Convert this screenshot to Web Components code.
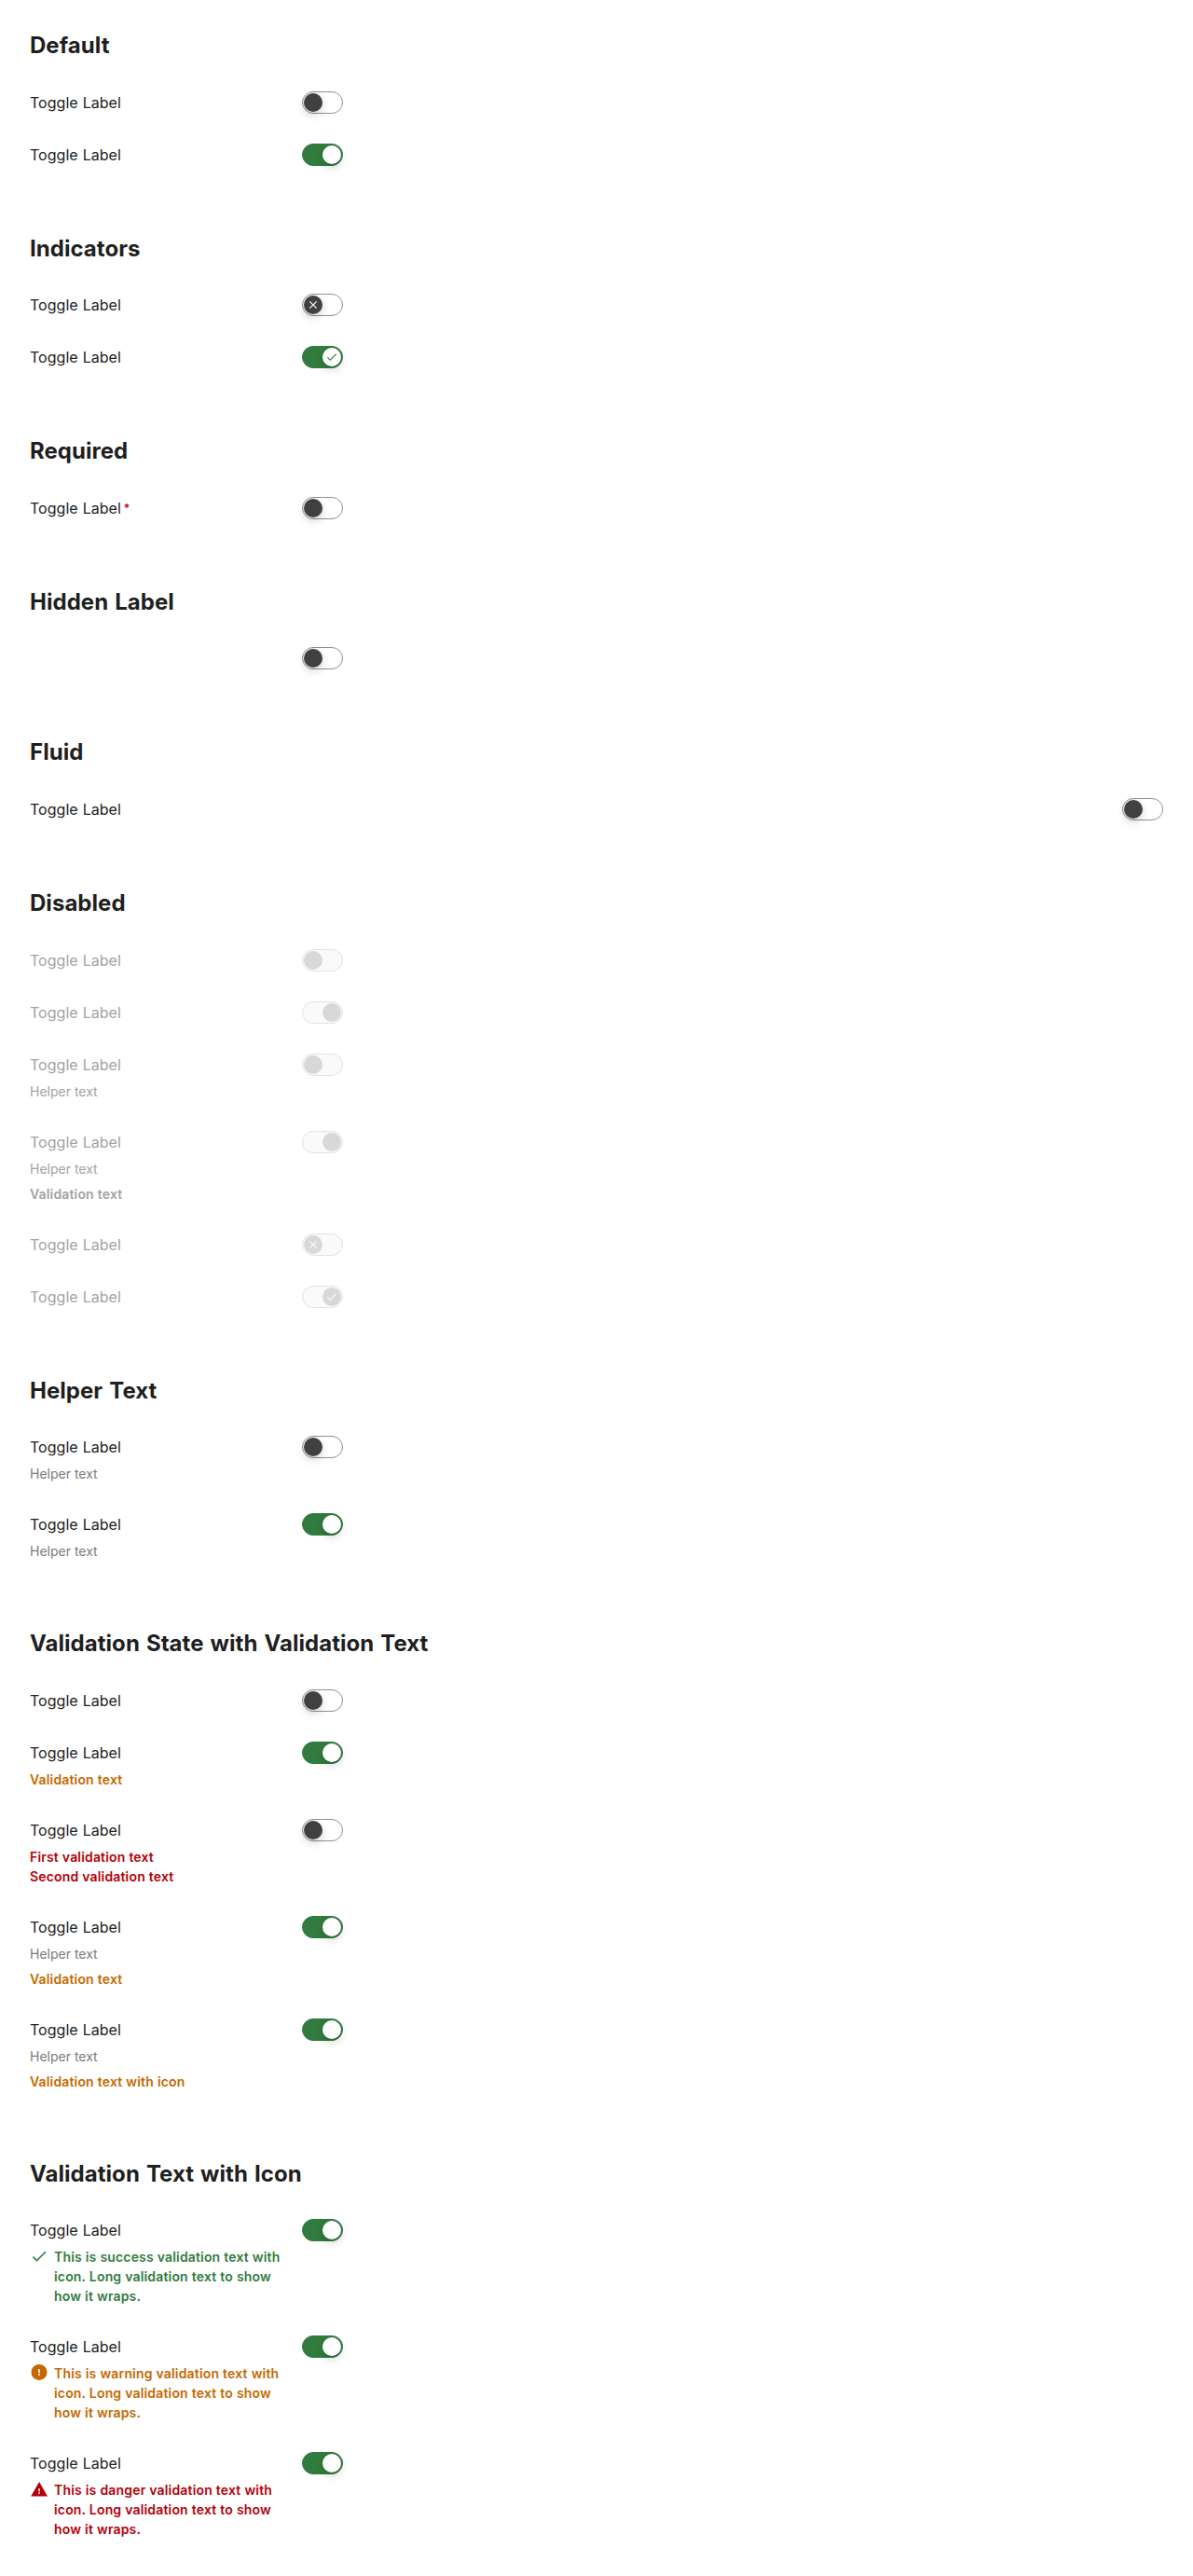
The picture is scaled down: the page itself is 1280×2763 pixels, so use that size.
<!DOCTYPE html>
<html lang="en">
<head>
<meta charset="utf-8">
<title>Toggle</title>
<style>
  body { margin: 0; background: #fff; font-family: Inter, "Liberation Sans", sans-serif; color: #222; }
</style>
</head>
<body>
<toggle-page>
  <toggle-section heading="Default">
    <ui-toggle label="Toggle Label"></ui-toggle>
    <ui-toggle label="Toggle Label" checked></ui-toggle>
  </toggle-section>
  <toggle-section heading="Indicators">
    <ui-toggle label="Toggle Label" indicator></ui-toggle>
    <ui-toggle label="Toggle Label" indicator checked></ui-toggle>
  </toggle-section>
  <toggle-section heading="Required">
    <ui-toggle label="Toggle Label" required></ui-toggle>
  </toggle-section>
  <toggle-section heading="Hidden Label">
    <ui-toggle></ui-toggle>
  </toggle-section>
  <toggle-section heading="Fluid">
    <ui-toggle label="Toggle Label" fluid></ui-toggle>
  </toggle-section>
  <toggle-section heading="Disabled">
    <ui-toggle label="Toggle Label" disabled></ui-toggle>
    <ui-toggle label="Toggle Label" disabled checked></ui-toggle>
    <ui-toggle label="Toggle Label" disabled><ui-helper>Helper text</ui-helper></ui-toggle>
    <ui-toggle label="Toggle Label" disabled checked>
      <ui-helper>Helper text</ui-helper>
      <ui-validation>Validation text</ui-validation>
    </ui-toggle>
    <ui-toggle label="Toggle Label" disabled indicator></ui-toggle>
    <ui-toggle label="Toggle Label" disabled indicator checked></ui-toggle>
  </toggle-section>
  <toggle-section heading="Helper Text">
    <ui-toggle label="Toggle Label"><ui-helper>Helper text</ui-helper></ui-toggle>
    <ui-toggle label="Toggle Label" checked><ui-helper>Helper text</ui-helper></ui-toggle>
  </toggle-section>
  <toggle-section heading="Validation State with Validation Text">
    <ui-toggle label="Toggle Label"></ui-toggle>
    <ui-toggle label="Toggle Label" checked><ui-validation state="warning">Validation text</ui-validation></ui-toggle>
    <ui-toggle label="Toggle Label"><ui-validation state="danger"><div>First validation text</div><div>Second validation text</div></ui-validation></ui-toggle>
    <ui-toggle label="Toggle Label" checked>
      <ui-helper>Helper text</ui-helper>
      <ui-validation state="warning">Validation text</ui-validation>
    </ui-toggle>
    <ui-toggle label="Toggle Label" checked>
      <ui-helper>Helper text</ui-helper>
      <ui-validation state="warning">Validation text with icon</ui-validation>
    </ui-toggle>
  </toggle-section>
  <toggle-section heading="Validation Text with Icon">
    <ui-toggle label="Toggle Label" checked><ui-validation state="success" icon>This is success validation text with icon. Long validation text to show how it wraps.</ui-validation></ui-toggle>
    <ui-toggle label="Toggle Label" checked><ui-validation state="warning" icon>This is warning validation text with icon. Long validation text to show how it wraps.</ui-validation></ui-toggle>
    <ui-toggle label="Toggle Label" checked><ui-validation state="danger" icon>This is danger validation text with icon. Long validation text to show how it wraps.</ui-validation></ui-toggle>
  </toggle-section>
</toggle-page>
<script>
const CHECK = 'M9 16.17 4.83 12l-1.42 1.41L9 19 21 7l-1.41-1.41z';
const CLOSE = 'M19 6.41 17.59 5 12 10.59 6.41 5 5 6.41 10.59 12 5 17.59 6.41 19 12 13.41 17.59 19 19 17.59 13.41 12z';
const ICONS = {
  success: CHECK,
  warning: 'M12 1.3a10.2 10.2 0 1 0 0 20.4 10.2 10.2 0 0 0 0-20.4zm1 14.3h-2v-2h2zm0-3.4h-2V7.6h2z',
  danger: 'M1.4 21h21.4L12.1 2.4zm11.7-3.2h-2v-1.8h2zm0-3.2h-2v-3.6h2z'
};
const svg = d => `<svg viewBox="0 0 24 24" aria-hidden="true"><path fill="currentColor" d="${d}"/></svg>`;

class Base extends HTMLElement {
  connectedCallback() {
    if (!this.shadowRoot) this.attachShadow({ mode: 'open' }).innerHTML = this.render();
  }
}

customElements.define('toggle-page', class extends Base {
  render() {
    return `<style>
      :host { display: flex; flex-direction: column; gap: 72px; padding: 32px; }
    </style><slot></slot>`;
  }
});

customElements.define('toggle-section', class extends Base {
  render() {
    return `<style>
      :host { display: flex; flex-direction: column; gap: 32px; }
      h2 { margin: 0; font-size: 24px; line-height: 33.6px; font-weight: 700; letter-spacing: .04px; word-spacing: 1.3px; color: #1f1f1f; }
    </style><h2>${this.getAttribute('heading')}</h2><slot></slot>`;
  }
});

customElements.define('ui-helper', class extends Base {
  render() {
    return `<style>
      :host { display: block; font-size: 14px; line-height: 21px; color: var(--off, #7b7b7b); }
    </style><slot></slot>`;
  }
});

customElements.define('ui-validation', class extends Base {
  render() {
    const state = this.getAttribute('state');
    return `<style>
      :host { display: flex; gap: 6px; font-size: 14px; line-height: 21px; font-weight: 600; letter-spacing: .16px; word-spacing: .3px; color: var(--off, #222); }
      :host([state=success]) { color: #327b3e; }
      :host([state=warning]) { color: #c36900; }
      :host([state=danger]) { color: #b30009; }
      svg { flex: none; width: 20px; height: 20px; }
    </style>${this.hasAttribute('icon') ? svg(ICONS[state]) : ''}<div><slot></slot></div>`;
  }
});

customElements.define('ui-switch', class extends Base {
  render() {
    const mark = this.hasAttribute('indicator') ? svg(this.hasAttribute('checked') ? CHECK : CLOSE) : '';
    return `<style>
      :host { box-sizing: border-box; flex: none; display: flex; align-items: center; width: 44px; height: 24px; padding: 1px; border: 1px solid #919191; border-radius: 12px; background: #fff; }
      .knob { display: flex; align-items: center; justify-content: center; width: 20px; height: 20px; border-radius: 50%; background: #404040; color: #fff; box-shadow: 0 4px 10px rgba(0,0,0,.16), 0 0 4px rgba(0,0,0,.05); }
      :host([checked]) { justify-content: flex-end; background: #327b3e; border-color: #327b3e; }
      :host([checked]) .knob { background: #fff; color: #327b3e; }
      :host([disabled]) { background: #fafafa; border-color: #e3e3e3; }
      :host([disabled]) .knob { background: #d8d8d8; color: #fafafa; box-shadow: none; }
      svg { width: 14px; height: 14px; }
    </style><div class="knob">${mark}</div>`;
  }
});

customElements.define('ui-toggle', class extends Base {
  render() {
    const flags = ['checked', 'disabled', 'indicator'].filter(a => this.hasAttribute(a)).join(' ');
    return `<style>
      :host { display: flex; justify-content: space-between; align-items: flex-start; gap: 16px; width: 336px; }
      :host([fluid]) { width: auto; }
      :host([disabled]) { --off: #a3a3a3; }
      .text { flex: 1; min-width: 0; display: flex; flex-direction: column; gap: 6px; }
      .label { display: flex; font-size: 16px; line-height: 24px; min-height: 24px; letter-spacing: .02px; word-spacing: .5px; color: var(--off, #222); }
      .star { margin-left: 3px; font-size: 12px; line-height: 23px; font-weight: 600; color: #b30009; }
    </style>
    <div class="text">
      <div class="label">${this.getAttribute('label') || ''}${this.hasAttribute('required') ? '<span class="star">*</span>' : ''}</div>
      <slot></slot>
    </div>
    <ui-switch ${flags}></ui-switch>`;
  }
});
</script>
</body>
</html>
